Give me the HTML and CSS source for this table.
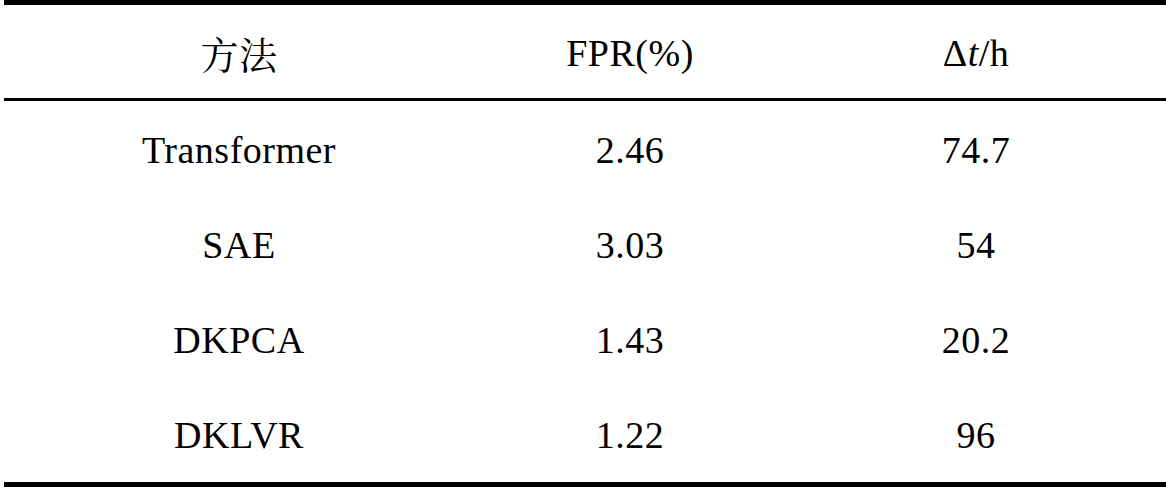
FILE: index.html
```html
<!DOCTYPE html>
<html lang="zh">

<head>
    <meta charset="UTF-8">
    <meta name="viewport" content="width=device-width, initial-scale=1.0">
    <title>方法对比</title>
    <link rel="stylesheet" href="styles.css">
</head>

<body>
    <table class="result-table">
        <colgroup>
            <col class="col-method">
            <col class="col-fpr">
            <col class="col-time">
        </colgroup>
        <thead>
            <tr>
                <th class="cjk">方法</th>
                <th>FPR(%)</th>
                <th>&Delta;<i>t</i>/h</th>
            </tr>
        </thead>
        <tbody>
            <tr>
                <td>Transformer</td>
                <td>2.46</td>
                <td>74.7</td>
            </tr>
            <tr>
                <td>SAE</td>
                <td>3.03</td>
                <td>54</td>
            </tr>
            <tr>
                <td>DKPCA</td>
                <td>1.43</td>
                <td>20.2</td>
            </tr>
            <tr class="last-row">
                <td>DKLVR</td>
                <td>1.22</td>
                <td>96</td>
            </tr>
        </tbody>
    </table>
</body>

</html>
```

FILE: styles.css
```css
body {
    margin: 0;
    padding: 0 0 0 4px;
    background: #fff;
    color: #000;
    font-family: "Liberation Serif", "Times New Roman", serif;
}

.result-table {
    width: 100%;
    border-collapse: collapse;
    table-layout: fixed;
    border-top: 5px solid #000;
    border-bottom: 5px solid #000;
    font-size: 38px;
    line-height: 42px;
    letter-spacing: 0.5px;
}

.col-method {
    width: 470px;
}

.col-fpr {
    width: 312px;
}

.result-table th,
.result-table td {
    padding: 2px 0 0 0;
    text-align: center;
    vertical-align: middle;
    font-weight: normal;
}

.result-table thead th {
    height: 91px;
    border-bottom: 3px solid #000;
}

.result-table tbody td {
    height: 93px;
}

.result-table .last-row td {
    height: 94px;
}

.cjk {
    font-family: "Noto Serif CJK SC", "Noto Sans CJK SC", serif;
    font-weight: 300;
}

.result-table i {
    font-style: italic;
}
```
